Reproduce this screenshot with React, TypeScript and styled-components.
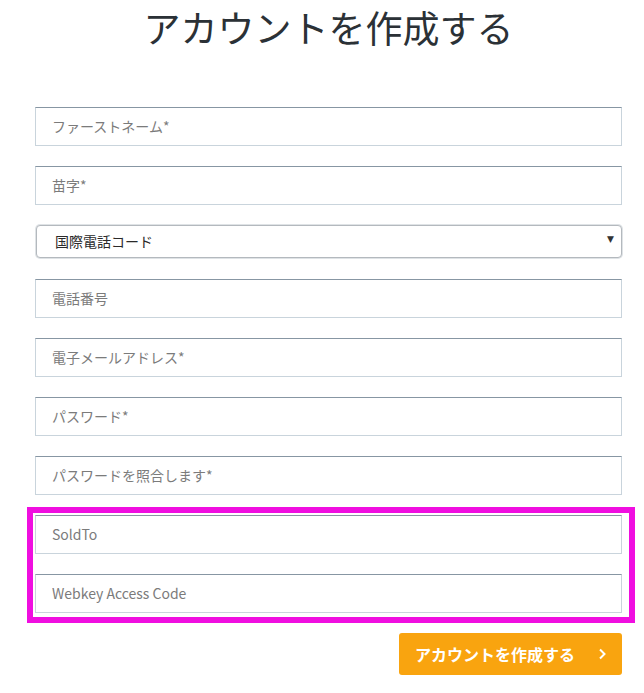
import React from "react";
import styled, { createGlobalStyle } from "styled-components";

const GlobalStyle = createGlobalStyle`
  body {
    margin: 0;
    background: #ffffff;
    font-family: "Noto Sans CJK JP", "Noto Sans", sans-serif;
  }
`;

const Page = styled.div`
  width: 644px;
  padding: 0 22px 0 35px;
  box-sizing: border-box;
`;

const Title = styled.h1`
  margin: 0;
  padding-top: 6px;
  height: 107px;
  box-sizing: border-box;
  text-align: center;
  font-size: 37px;
  line-height: 42px;
  font-weight: 400;
  color: #2b3136;
`;

const Form = styled.form`
  display: flex;
  flex-flow: column nowrap;
  gap: 20px;
`;

const TextInput = styled.input`
  display: block;
  width: 100%;
  height: 39px;
  box-sizing: border-box;
  padding: 0 16px 2px;
  border: 1px solid #c9d4dc;
  border-top-color: #8796a3;
  border-radius: 0;
  background: #fff;
  font-family: "Noto Sans CJK JP", "Open Sans", sans-serif;
  font-size: 14px;
  color: #333;
  outline: none;

  &::placeholder {
    color: #7b7b7b;
  }
`;

const SelectWrap = styled.div`
  position: relative;
  margin-left: 1px;
  margin-bottom: 1px;
`;

const Select = styled.select`
  display: block;
  width: 100%;
  height: 33px;
  box-sizing: border-box;
  padding: 0 18px 1px;
  appearance: none;
  border: 1px solid #b4b9be;
  box-shadow: 0 0 0 1px #dfe3e6;
  border-radius: 4px;
  background: #fff;
  font-family: "Noto Sans CJK JP", sans-serif;
  font-size: 14px;
  color: #2a2a2a;
  outline: none;
`;

const Caret = styled.span`
  position: absolute;
  right: 8px;
  top: 9px;
  font-size: 9px;
  color: #333;
  pointer-events: none;
  font-family: "DejaVu Sans", sans-serif;
`;

const Highlight = styled.div`
  display: flex;
  flex-flow: column nowrap;
  gap: 20px;
  margin: -8px -13px 0 -8px;
  padding: 2px 7px 4px 2px;
  border: 6px solid #f00ee0;
`;

const Actions = styled.div`
  display: flex;
  justify-content: flex-end;
  margin-top: -10px;
`;

const SubmitButton = styled.button`
  display: flex;
  align-items: center;
  justify-content: space-between;
  width: 223px;
  height: 42px;
  padding: 0 16px 1px;
  box-sizing: border-box;
  border: none;
  border-radius: 3px;
  background: #f9a40f;
  color: #fff;
  font-family: "Noto Sans CJK JP", sans-serif;
  font-size: 16px;
  font-weight: 700;
  cursor: pointer;
`;

const Chevron = () => (
  <svg width="8" height="12" viewBox="0 0 8 12">
    <path d="M2 1.5 L6.5 6 L2 10.5" fill="none" stroke="#fff" strokeWidth="2" />
  </svg>
);

const fields = [
  "ファーストネーム*",
  "苗字*",
];

const fields2 = [
  "電話番号",
  "電子メールアドレス*",
  "パスワード*",
  "パスワードを照合します*",
];

export default function App() {
  return (
    <Page>
      <GlobalStyle />
      <Title>アカウントを作成する</Title>
      <Form onSubmit={(e) => e.preventDefault()}>
        {fields.map((f) => (
          <TextInput key={f} placeholder={f} />
        ))}
        <SelectWrap>
          <Select defaultValue="">
            <option value="">国際電話コード</option>
          </Select>
          <Caret>▼</Caret>
        </SelectWrap>
        {fields2.map((f) => (
          <TextInput
            key={f}
            placeholder={f}
            type={f.startsWith("パスワード") ? "password" : "text"}
          />
        ))}
        <Highlight>
          <TextInput placeholder="SoldTo" />
          <TextInput placeholder="Webkey Access Code" />
        </Highlight>
        <Actions>
          <SubmitButton type="submit">
            アカウントを作成する
            <Chevron />
          </SubmitButton>
        </Actions>
      </Form>
    </Page>
  );
}
